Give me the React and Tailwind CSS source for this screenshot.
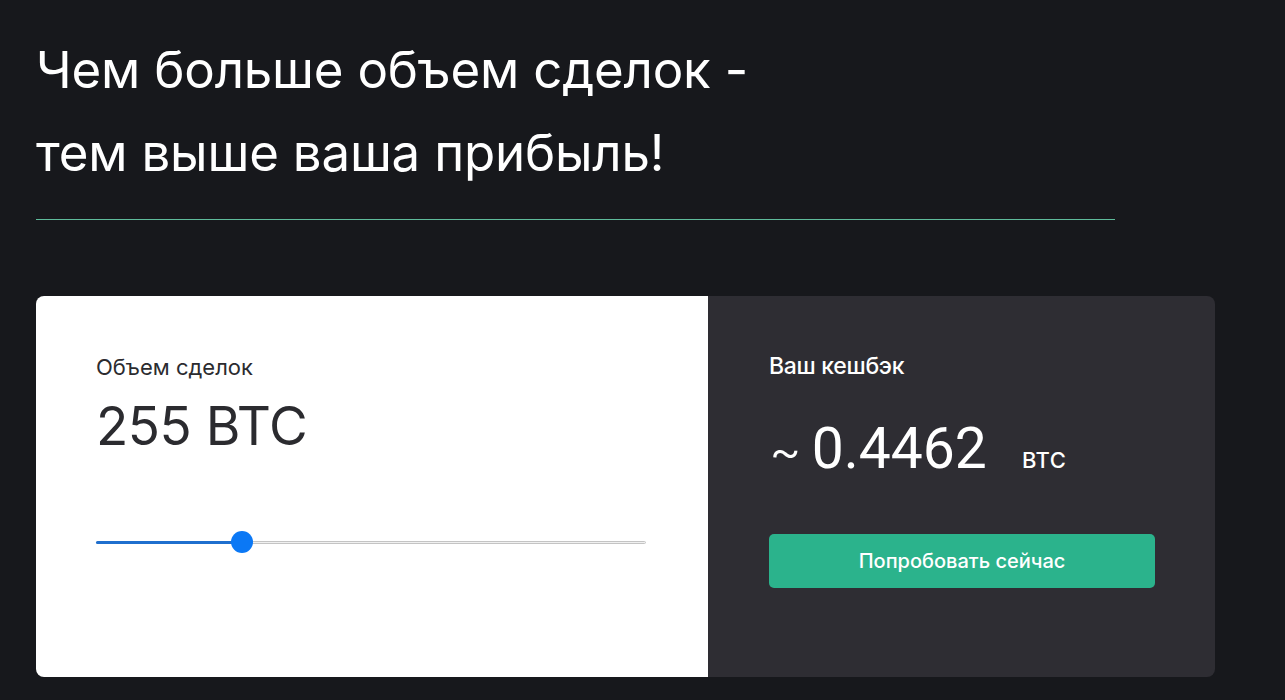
import { useState } from "react";

export default function App() {
  const [volume, setVolume] = useState(255);
  const max = 1000;
  const trackW = 550;
  const thumbW = 22;
  const thumbX = thumbW / 2 + (volume / max) * (trackW - thumbW);

  return (
    <div className="min-h-[700px] w-full bg-[#17181c] font-['Inter',sans-serif] text-white">
      <div className="pl-[36px] pt-[28px]">
        <h1 className="text-[51px] font-normal leading-[83px] tracking-[-0.2px]">
          Чем больше объем сделок -
          <br />
          тем выше ваша прибыль!
        </h1>
        <div className="mt-[25px] h-px w-[1079px] bg-[#5fbb9b]" />

        <div className="mt-[76px] flex h-[381px] w-[1179px] overflow-hidden rounded-[8px]">
          <div className="w-[672px] bg-white pl-[60px] pt-[55px] text-[#2b2b2f]">
            <p className="text-[22px] leading-[32px]">Объем сделок</p>
            <p className="mt-[12px] text-[53px] leading-[62px] tracking-[-0.5px]">{volume} BTC</p>
            <div className="relative mt-[75px] h-[20px] w-[550px]">
              <div className="absolute left-0 right-0 top-[9px] h-[3px] rounded-full border border-[#c4c4c4] bg-[#f0f0f0]" />
              <div
                className="absolute left-0 top-[9px] h-[3px] rounded-full bg-[#1f6fce]"
                style={{ width: `${thumbX}px` }}
              />
              <div
                className="absolute top-[-1px] h-[22px] w-[22px] -translate-x-1/2 rounded-full bg-[#0b78f5]"
                style={{ left: `${thumbX}px` }}
              />
              <input
                type="range"
                min="0"
                max={max}
                value={volume}
                onChange={(e) => setVolume(Number(e.target.value))}
                className="absolute inset-0 w-full cursor-pointer opacity-0"
              />
            </div>
          </div>
          <div className="flex-1 bg-[#2e2d33] pl-[61px] pt-[54px]">
            <p className="text-[23px] font-medium leading-[32px] tracking-[-0.3px]">Ваш кешбэк</p>
            <div className="mt-[37px] flex items-baseline">
              <span className="text-[50px] font-light leading-[60px]">~</span>
              <span className="ml-[10px] font-['Roboto',sans-serif] text-[57px] leading-[60px]">0.4462</span>
              <span className="ml-[35px] text-[22px] font-medium tracking-[0.5px]">BTC</span>
            </div>
            <button className="mt-[54px] h-[54px] w-[386px] rounded-[5px] bg-[#2bb38c] text-[20px] font-medium text-white">
              Попробовать сейчас
            </button>
          </div>
        </div>
      </div>
    </div>
  );
}
